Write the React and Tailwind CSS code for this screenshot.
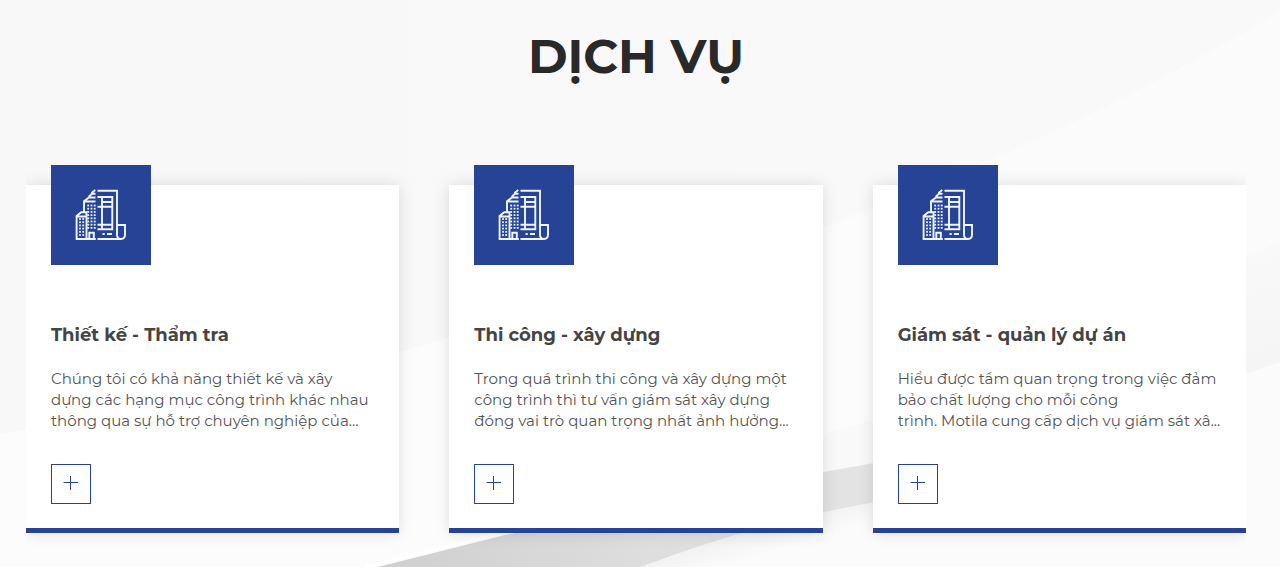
const services = [
  {
    title: "Thiết kế - Thẩm tra",
    text: "Chúng tôi có khả năng thiết kế và xây dựng các hạng mục công trình khác nhau thông qua sự hỗ trợ chuyên nghiệp của...",
  },
  {
    title: "Thi công - xây dựng",
    text: "Trong quá trình thi công và xây dựng một công trình thì tư vấn giám sát xây dựng đóng vai trò quan trọng nhất ảnh hưởng...",
  },
  {
    title: "Giám sát - quản lý dự án",
    text: "Hiểu được tầm quan trọng trong việc đảm bảo chất lượng cho mỗi công trình.\u00a0Motila\u00a0cung cấp dịch vụ giám sát xâ...",
  },
];

function Backdrop() {
  return (
    <svg
      className="absolute inset-0 h-full w-full"
      viewBox="0 0 1280 567"
      preserveAspectRatio="none"
      aria-hidden="true"
    >
      <defs>
        <linearGradient id="base" x1="0" y1="0" x2="1" y2="0">
          <stop offset="0" stopColor="#f8f8f8" />
          <stop offset="1" stopColor="#f9f9f9" />
        </linearGradient>
        <linearGradient id="fold" gradientUnits="userSpaceOnUse" x1="400" y1="560" x2="900" y2="490">
          <stop offset="0" stopColor="#d0d0d0" />
          <stop offset="0.5" stopColor="#dedede" />
          <stop offset="1" stopColor="#e4e4e4" />
        </linearGradient>
        <linearGradient id="floor" gradientUnits="userSpaceOnUse" x1="700" y1="530" x2="712" y2="570">
          <stop offset="0" stopColor="#ececec" />
          <stop offset="1" stopColor="#fbfbfb" />
        </linearGradient>
        <linearGradient id="upper" gradientUnits="userSpaceOnUse" x1="1260" y1="240" x2="1280" y2="370">
          <stop offset="0" stopColor="#f9f9f9" />
          <stop offset="1" stopColor="#f5f5f5" />
        </linearGradient>
      </defs>
      <rect width="1280" height="567" fill="url(#base)" />
      <path d="M1280 12 Q1140 95 995 158 L820 228 V567 H1280Z" fill="#fbfbfb" />
      <path d="M0 434 Q200 405 400 352 L880 212 V567 H0Z" fill="#fcfcfc" />
      <path d="M1240 259 L1280 241 V362 L1240 376Z" fill="url(#upper)" />
      <path d="M820 435 L880 418 V470 H820Z" fill="#f9f9f9" />
      <path d="M378 567 L505 535 Q664 502 823 472 L880 462 V520 L740 567Z" fill="url(#fold)" />
      <path d="M640 567 Q740 530 823 512 L880 501 L960 485 V567Z" fill="url(#floor)" />
      <path d="M960 480 H1280 V567 H960Z" fill="#fbfbfb" />
      <path d="M366 567 L505 532" fill="none" stroke="#ffffff" strokeWidth="3" />
    </svg>
  );
}

function BuildingIcon() {
  const rows = [40.5, 43.7, 46.9, 50.1, 53.3, 56.5, 59.7, 62.9];
  const lowRows = [54, 57.2, 60.4, 63.6, 66.8, 70];
  return (
    <svg
      className="h-full w-full"
      viewBox="0 0 100 100"
      fill="none"
      stroke="#f0f6ff"
      strokeWidth="1.9"
      aria-hidden="true"
    >
      <path d="M46.5 25.8H66V69.5Q66 74 70 74T74 69.5V60H66M46.5 74H70" />
      <path d="M46.5 32H61.3V64.3H46.5M51 32V64.3M51 37H61.3M46.5 41.8H61.3M46.5 59.8H61.3M51.5 69H53.7M56 69H61" />
      <path d="M25.6 74.8V51L30.2 47.3H35.5V74.8M25.6 51.5H35.5M25 74H44.8" />
      <path d="M33 48V36.3L38 32.5H44.5M33 36.5H44.5M38.3 32.5V31.2L41 28.8H44.5M41 28.8V27.6L44.3 25" />
      <path d="M38.3 74.8V67.8H42.8V74.8" />
      <g fill="#f0f6ff" stroke="none">
        {rows.map((y) =>
          [37.2, 40.5, 43.7].map((x) => (
            <rect key={x + "-" + y} x={x - 0.9} y={y - 0.9} width="1.8" height="1.8" />
          ))
        )}
        {lowRows.map((y) =>
          [29, 32.2].map((x) => (
            <rect key={x + "-" + y} x={x - 0.9} y={y - 0.9} width="1.8" height="1.8" />
          ))
        )}
      </g>
    </svg>
  );
}

function ServiceCard({ title, text }) {
  return (
    <article className="border-b-5 border-[#264396] bg-white px-[25px] pb-6 shadow-[0_0_15px_rgba(0,0,0,0.12)]">
      <div className="-mt-5 h-25 w-25 bg-[#264396]">
        <BuildingIcon />
      </div>
      <h3 className="mt-14 text-lg leading-7 font-bold text-[#444444]">{title}</h3>
      <p className="mt-[19px] text-[15px] leading-[21px] font-normal text-[#555555]">{text}</p>
      <a
        href="#"
        aria-label={title}
        className="mt-[33px] flex h-10 w-10 items-center justify-center border border-[#264396] text-[#264396]"
      >
        <svg className="h-4 w-4" viewBox="0 0 16 16" stroke="currentColor" aria-hidden="true">
          <path d="M0.5 6.5H15M7.5 -0.5V14" />
        </svg>
      </a>
    </article>
  );
}

export default function App() {
  return (
    <section className="relative overflow-hidden pb-[18px] font-['Montserrat','Inter',sans-serif]">
      <Backdrop />
      <div className="relative pr-[34px] pl-[26px]">
        <h2 className="pt-6 text-center text-5xl leading-16 font-bold text-[#292929]">DỊCH VỤ</h2>
        <div className="mt-[53px] overflow-hidden pt-11 pb-4">
          <div className="grid grid-cols-3 gap-[50px]">
            {services.map((service) => (
              <ServiceCard key={service.title} {...service} />
            ))}
          </div>
        </div>
      </div>
    </section>
  );
}
